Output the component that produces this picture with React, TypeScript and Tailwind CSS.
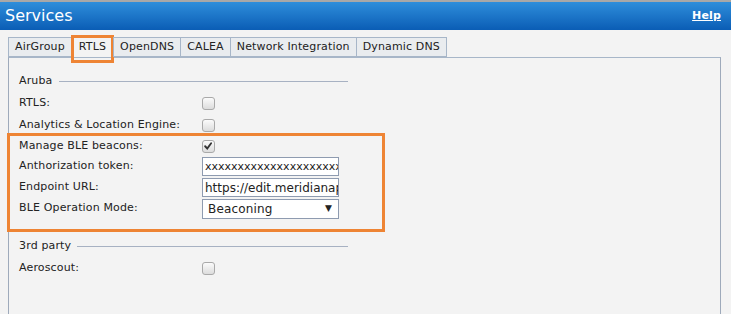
const tabs = ['AirGroup', 'RTLS', 'OpenDNS', 'CALEA', 'Network Integration', 'Dynamic DNS'];

function Check({ checked = false }: { checked?: boolean }) {
  return (
    <span className="relative inline-block h-[13px] w-[13px] rounded-[3px] border border-[#a9a9a9] bg-gradient-to-b from-[#fbfbfb] to-[#dcdcdc]">
      {checked && (
        <svg viewBox="0 0 13 13" className="absolute left-0 top-0 h-[11px] w-[11px]">
          <path d="M2.5 6.2 L5 8.8 L9.6 2.6" fill="none" stroke="#333" strokeWidth="2.2" strokeLinecap="round" />
        </svg>
      )}
    </span>
  );
}

function Section({ title }: { title: string }) {
  return (
    <div className="flex h-[22px] w-[329px] items-center">
      <span>{title}</span>
      <span className="ml-[6px] h-px flex-1 bg-[#a7b1c2]" />
    </div>
  );
}

function Row({ label, children }: { label: string; children: React.ReactNode }) {
  return (
    <div className="flex items-center">
      <div className="w-[183px]">{label}</div>
      {children}
    </div>
  );
}

export default function App() {
  return (
    <div className="h-[314px] w-[731px] overflow-hidden bg-[#f3f3f3] font-['DejaVu_Sans',Verdana,sans-serif] text-[11px] tracking-[0.15px] text-[#222]">
      <div className="flex h-[30px] items-center justify-between border-t-2 border-[#a8a8a8] bg-gradient-to-b from-[#2e8edb] to-[#0a5db5] pl-[5px] pr-[10px] text-white">
        <span className="text-[16px] leading-none tracking-normal">Services</span>
        <a className="text-[11px] font-bold underline">Help</a>
      </div>

      <div className="px-[8px] pt-[7px]">
        <div className="flex h-[20px] pl-px">
          {tabs.map((t) => (
            <div
              key={t}
              className={
                t === 'RTLS'
                  ? 'relative -ml-px flex items-center border border-b-0 border-[#a7b6c8] bg-[#f3f3f3] px-[7px]'
                  : 'relative -ml-px flex items-center border border-[#a7b6c8] bg-[#e9ecef] px-[6px]'
              }
            >
              {t}
              {t === 'RTLS' && (
                <span className="pointer-events-none absolute -left-[1px] -right-[1px] -top-[3px] h-[28px] border-[3px] border-[#ee8434]" />
              )}
            </div>
          ))}
        </div>

        <div className="h-[260px] w-[713px] border border-t-[#a7b6c8] border-x-[#9eaabb] border-b-0 bg-[#f3f3f3] pl-[10px] pt-[12px]">
          <Section title="Aruba" />
          <div className="flex flex-col">
            <div className="flex h-[22px] items-center">
              <Row label="RTLS:">
                <Check />
              </Row>
            </div>
            <div className="flex h-[22px] items-center">
              <Row label="Analytics & Location Engine:">
                <Check />
              </Row>
            </div>
            <div className="relative">
              <span className="pointer-events-none absolute -left-[12px] -top-[3px] h-[99px] w-[378px] border-[3px] border-[#ee8434]" />
              <div className="flex h-[20px] items-center">
                <Row label="Manage BLE beacons:">
                  <Check checked />
                </Row>
              </div>
              <div className="flex h-[21px] items-center">
                <Row label="Anthorization token:">
                  <input
                    readOnly
                    value="xxxxxxxxxxxxxxxxxxxxxxxxxx"
                    className="h-[19px] w-[137px] border border-[#8e9bb0] bg-white pl-[2px] text-[11px] tracking-normal text-[#222] outline-none"
                  />
                </Row>
              </div>
              <div className="flex h-[21px] items-center">
                <Row label="Endpoint URL:">
                  <input
                    readOnly
                    value="https://edit.meridianapps.com"
                    className="h-[19px] w-[137px] border border-[#8e9bb0] bg-white pl-[2px] text-[12px] tracking-normal text-[#222] outline-none"
                  />
                </Row>
              </div>
              <div className="flex h-[21px] items-center">
                <Row label="BLE Operation Mode:">
                  <div className="flex h-[20px] w-[137px] items-center justify-between border border-[#8e9bb0] bg-white pl-[5px] pr-[6px] text-[12px]">
                    <span>Beaconing</span>
                    <span className="text-[9px]">▼</span>
                  </div>
                </Row>
              </div>
            </div>
            <div className="h-[16px]" />
            <Section title="3rd party" />
            <div className="flex h-[22px] items-center">
              <Row label="Aeroscout:">
                <Check />
              </Row>
            </div>
          </div>
        </div>
      </div>
    </div>
  );
}
